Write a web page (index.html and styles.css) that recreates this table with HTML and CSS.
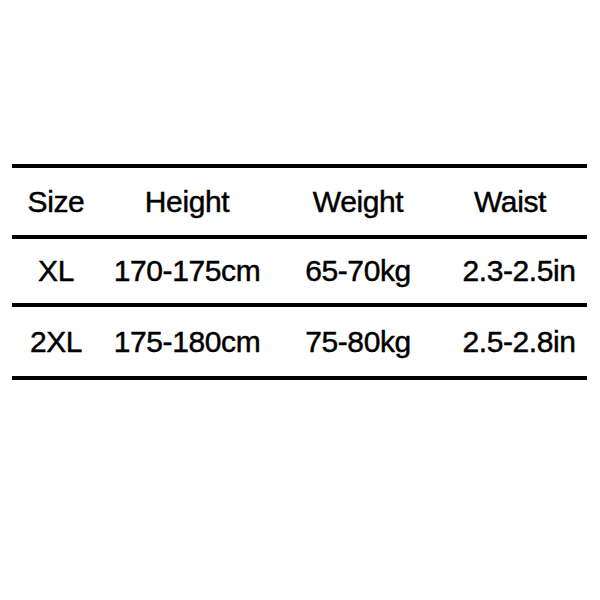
FILE: index.html
```html
<!DOCTYPE html>
<html>
<head>
<meta charset="utf-8">
<link rel="stylesheet" href="styles.css">
</head>
<body>
<div class="page">
  <div class="table">
    <div class="row row-head">
      <div class="cell">Size</div>
      <div class="cell">Height</div>
      <div class="cell">Weight</div>
      <div class="cell cell-waist-head">Waist</div>
    </div>
    <div class="row row-1">
      <div class="cell">XL</div>
      <div class="cell">170-175cm</div>
      <div class="cell">65-70kg</div>
      <div class="cell cell-waist">2.3-2.5in</div>
    </div>
    <div class="row row-2">
      <div class="cell">2XL</div>
      <div class="cell">175-180cm</div>
      <div class="cell">75-80kg</div>
      <div class="cell cell-waist">2.5-2.8in</div>
    </div>
  </div>
</div>
</body>
</html>
```

FILE: styles.css
```css
html, body {
  margin: 0;
  padding: 0;
  background: #fff;
}
.page {
  width: 600px;
  height: 600px;
  padding: 164px 0 0 12px;
  box-sizing: border-box;
}
.table {
  width: 575px;
  border-bottom: 4px solid #000;
  font-family: "Liberation Sans", Arial, sans-serif;
  font-size: 30px;
  color: #000;
  -webkit-text-stroke: 0.45px #000;
  letter-spacing: -0.4px;
}
.row {
  display: grid;
  grid-template-columns: 88px 174px 168px 1fr;
  align-items: center;
  border-top: 4px solid #000;
}
.row-head { height: 67px; }
.row-1 { height: 64px; }
.row-2 { height: 69px; }
.cell {
  text-align: center;
  white-space: nowrap;
  line-height: 1;
}
.cell-waist-head { padding-right: 9px; }
.cell-waist { padding-left: 9px; }
```
